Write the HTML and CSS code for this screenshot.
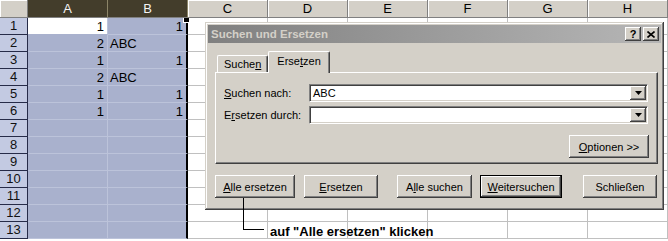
FILE: index.html
```html
<!DOCTYPE html>
<html lang="de">
<head>
    <meta charset="UTF-8">
    <title>Suchen und Ersetzen</title>
    <link rel="stylesheet" href="styles.css">
</head>
<body>
    <div class="sheet">
        <div class="corner"></div>
        <div class="ch sel">A</div>
        <div class="ch sel">B</div>
        <div class="ch">C</div>
        <div class="ch">D</div>
        <div class="ch">E</div>
        <div class="ch">F</div>
        <div class="ch">G</div>
        <div class="ch">H</div>

        <div class="rh">1</div>
        <div class="c sel act num">1</div>
        <div class="c sel edge num handle">1<span class="fill"></span></div>
        <div class="c"></div><div class="c"></div><div class="c"></div><div class="c"></div><div class="c"></div><div class="c"></div>

        <div class="rh">2</div>
        <div class="c sel num">2</div>
        <div class="c sel edge">ABC</div>
        <div class="c"></div><div class="c"></div><div class="c"></div><div class="c"></div><div class="c"></div><div class="c"></div>

        <div class="rh">3</div>
        <div class="c sel num">1</div>
        <div class="c sel edge num">1</div>
        <div class="c"></div><div class="c"></div><div class="c"></div><div class="c"></div><div class="c"></div><div class="c"></div>

        <div class="rh">4</div>
        <div class="c sel num">2</div>
        <div class="c sel edge">ABC</div>
        <div class="c"></div><div class="c"></div><div class="c"></div><div class="c"></div><div class="c"></div><div class="c"></div>

        <div class="rh">5</div>
        <div class="c sel num">1</div>
        <div class="c sel edge num">1</div>
        <div class="c"></div><div class="c"></div><div class="c"></div><div class="c"></div><div class="c"></div><div class="c"></div>

        <div class="rh">6</div>
        <div class="c sel num">1</div>
        <div class="c sel edge num">1</div>
        <div class="c"></div><div class="c"></div><div class="c"></div><div class="c"></div><div class="c"></div><div class="c"></div>

        <div class="rh">7</div>
        <div class="c sel"></div><div class="c sel edge"></div>
        <div class="c"></div><div class="c"></div><div class="c"></div><div class="c"></div><div class="c"></div><div class="c"></div>

        <div class="rh">8</div>
        <div class="c sel"></div><div class="c sel edge"></div>
        <div class="c"></div><div class="c"></div><div class="c"></div><div class="c"></div><div class="c"></div><div class="c"></div>

        <div class="rh">9</div>
        <div class="c sel"></div><div class="c sel edge"></div>
        <div class="c"></div><div class="c"></div><div class="c"></div><div class="c"></div><div class="c"></div><div class="c"></div>

        <div class="rh">10</div>
        <div class="c sel"></div><div class="c sel edge"></div>
        <div class="c"></div><div class="c"></div><div class="c"></div><div class="c"></div><div class="c"></div><div class="c"></div>

        <div class="rh">11</div>
        <div class="c sel"></div><div class="c sel edge"></div>
        <div class="c"></div><div class="c"></div><div class="c"></div><div class="c"></div><div class="c"></div><div class="c"></div>

        <div class="rh">12</div>
        <div class="c sel"></div><div class="c sel edge"></div>
        <div class="c"></div><div class="c"></div><div class="c"></div><div class="c"></div><div class="c"></div><div class="c"></div>

        <div class="rh">13</div>
        <div class="c sel"></div><div class="c sel edge"></div>
        <div class="c"></div><div class="c"></div><div class="c"></div><div class="c"></div><div class="c"></div><div class="c"></div>
    </div>

    <div class="dialog">
        <div class="titlebar">
            <span class="title">Suchen und Ersetzen</span>
            <span class="tbtn help">?</span>
            <span class="tbtn close">
                <svg width="8" height="7" viewBox="0 0 8 7"><path d="M0.5 0.5 L7.5 6.5 M7.5 0.5 L0.5 6.5" stroke="#000" stroke-width="1.6"/></svg>
            </span>
        </div>
        <div class="dlg-body">
            <div class="tabs">
                <div class="tab">Suche<u>n</u></div>
                <div class="tab active">Erse<u>t</u>zen</div>
            </div>
            <div class="panel">
                <div class="field">
                    <label><u>S</u>uchen nach:</label>
                    <div class="combo">
                        <span class="val">ABC</span>
                        <span class="drop"><svg width="7" height="4" viewBox="0 0 7 4"><polygon points="0,0 7,0 3.5,4" fill="#000"/></svg></span>
                    </div>
                </div>
                <div class="field">
                    <label>E<u>r</u>setzen durch:</label>
                    <div class="combo">
                        <span class="val"></span>
                        <span class="drop"><svg width="7" height="4" viewBox="0 0 7 4"><polygon points="0,0 7,0 3.5,4" fill="#000"/></svg></span>
                    </div>
                </div>
                <div class="opt-row">
                    <button class="btn opt"><u>O</u>ptionen &gt;&gt;</button>
                </div>
            </div>
            <div class="actions">
                <button class="btn b-all"><u>A</u>lle ersetzen</button>
                <button class="btn b-repl"><u>E</u>rsetzen</button>
                <button class="btn b-find"><span>A<u>l</u>le suchen</span></button>
                <button class="btn b-next default"><u>W</u>eitersuchen</button>
                <button class="btn b-close">Schließen</button>
            </div>
        </div>
    </div>

    <div class="callout-line"></div>
    <div class="callout-text">auf "Alle ersetzen" klicken</div>
</body>
</html>
```

FILE: styles.css
```css
body {
    margin: 0;
    background-color: white;
    overflow: hidden;
    font-family: "Liberation Sans", Arial, sans-serif;
}
.sheet {
    display: grid;
    grid-template-columns: 28px repeat(8, 80px);
    grid-template-rows: 18px repeat(13, 17px);
    font-size: 13px;
}
.sheet > div {
    box-sizing: border-box;
}
.corner {
    background-color: #d4d0c8;
    border-right: 1px solid #808080;
    border-bottom: 1px solid #808080;
    box-shadow: inset 1px 1px #fff;
}
.ch {
    background-color: #d4d0c8;
    border-right: 1px solid #808080;
    border-bottom: 1px solid #808080;
    box-shadow: inset 1px 1px #fff;
    text-align: center;
    line-height: 17px;
    color: #000;
}
.ch.sel {
    background-color: #433d2b;
    color: #f4f4f4;
    border-right-color: #8c8568;
    box-shadow: none;
}
.rh {
    background-color: #c3cae2;
    border-right: 1px solid #262b48;
    border-bottom: 1px solid #262b48;
    text-align: center;
    line-height: 16px;
    color: #111;
}
.c {
    border-right: 1px solid #c0c0c0;
    border-bottom: 1px solid #c0c0c0;
    padding: 1px 2px 0 2px;
    line-height: 15px;
    white-space: nowrap;
    overflow: hidden;
}
.c.sel {
    background-color: #a9b1cd;
    border-color: #bcc3da;
}
.c.act {
    background-color: #fff;
    border-bottom-color: #a9b1cd;
}
.c.num {
    text-align: right;
    padding-right: 3px;
}
.c.edge {
    border-right: 2px solid #000;
}
.handle {
    position: relative;
    overflow: visible;
}
.fill {
    position: absolute;
    right: -4px;
    top: 0;
    width: 5px;
    height: 4px;
    background-color: #000;
    border: 1px solid #fff;
    border-top: none;
}

/* dialog */
.dialog {
    position: absolute;
    left: 205px;
    top: 22px;
    width: 459px;
    height: 188px;
    box-sizing: border-box;
    padding: 3px;
    background-color: #d4d0c8;
    box-shadow: inset -1px -1px #404040, inset 1px 1px #d4d0c8, inset -2px -2px #808080, inset 2px 2px #fff;
    font-size: 11px;
    color: #000;
}
.titlebar {
    height: 18px;
    display: flex;
    align-items: center;
    padding: 0 2px 0 3px;
    background: linear-gradient(to right, #808080, #b6b6b6);
}
.title {
    flex: 1;
    color: #d4d0c8;
    font-weight: bold;
    font-size: 11.5px;
}
.tbtn {
    width: 16px;
    height: 14px;
    box-sizing: border-box;
    display: flex;
    align-items: center;
    justify-content: center;
    background-color: #d4d0c8;
    box-shadow: inset -1px -1px #404040, inset 1px 1px #fff, inset -2px -2px #808080;
    font-weight: bold;
    font-size: 11px;
}
.tbtn.close {
    margin-left: 2px;
}
.dlg-body {
    padding: 8px 3px 0 7px;
}
.tabs {
    display: flex;
    align-items: flex-end;
    height: 21px;
    padding-left: 2px;
    position: relative;
    z-index: 1;
}
.tab {
    height: 17px;
    box-sizing: border-box;
    padding: 0 6px;
    line-height: 16px;
    background-color: #d4d0c8;
    border-top: 1px solid #fff;
    border-left: 1px solid #fff;
    border-right: 1px solid #404040;
    box-shadow: inset -1px 0 #808080;
    border-radius: 2px 2px 0 0;
}
.tab.active {
    height: 22px;
    margin-bottom: -1px;
    padding: 0 8px;
    line-height: 19px;
}
.panel {
    height: 92px;
    box-sizing: border-box;
    border: 1px solid;
    border-color: #fff #404040 #404040 #fff;
    box-shadow: inset -1px -1px #808080;
    padding: 11px 8px 0 8px;
    display: flex;
    flex-direction: column;
    gap: 4px;
}
.field {
    display: flex;
    align-items: center;
    height: 18px;
}
.field label {
    width: 85px;
}
.combo {
    width: 339px;
    height: 18px;
    box-sizing: border-box;
    display: flex;
    padding: 1px;
    border: 1px solid;
    border-color: #808080 #fff #fff #808080;
    box-shadow: inset 1px 1px #404040, inset -1px -1px #d4d0c8;
    background-color: #fff;
}
.val {
    flex: 1;
    padding-left: 2px;
    line-height: 14px;
}
.drop {
    width: 16px;
    height: 14px;
    box-sizing: border-box;
    display: flex;
    align-items: center;
    justify-content: center;
    background-color: #d4d0c8;
    box-shadow: inset -1px -1px #404040, inset 1px 1px #fff, inset -2px -2px #808080;
}
.opt-row {
    display: flex;
    justify-content: flex-end;
    margin-top: 7px;
}
.btn {
    height: 23px;
    box-sizing: border-box;
    padding: 0;
    border: none;
    background-color: #d4d0c8;
    box-shadow: inset -1px -1px #404040, inset 1px 1px #fff, inset -2px -2px #808080, inset 2px 2px #d4d0c8;
    font-family: inherit;
    font-size: 11px;
    color: #000;
}
.opt {
    width: 80px;
}
.actions {
    display: flex;
    margin-top: 11px;
}
.b-all {
    width: 80px;
}
.b-repl {
    width: 74px;
    margin-left: 9px;
}
.b-find {
    width: 75px;
    margin-left: 19px;
}
.b-next {
    width: 82px;
    margin-left: 8px;
}
.b-close {
    width: 74px;
    margin-left: 21px;
}
.btn.default {
    border: 1px solid #000;
}

/* annotation */
.callout-line {
    position: absolute;
    left: 243px;
    top: 198px;
    width: 20px;
    height: 31px;
    border-left: 1px solid #000;
    border-bottom: 1px solid #000;
}
.callout-text {
    position: absolute;
    left: 270px;
    top: 224px;
    font-size: 13px;
    font-weight: bold;
    line-height: 15px;
    color: #000;
}
```
